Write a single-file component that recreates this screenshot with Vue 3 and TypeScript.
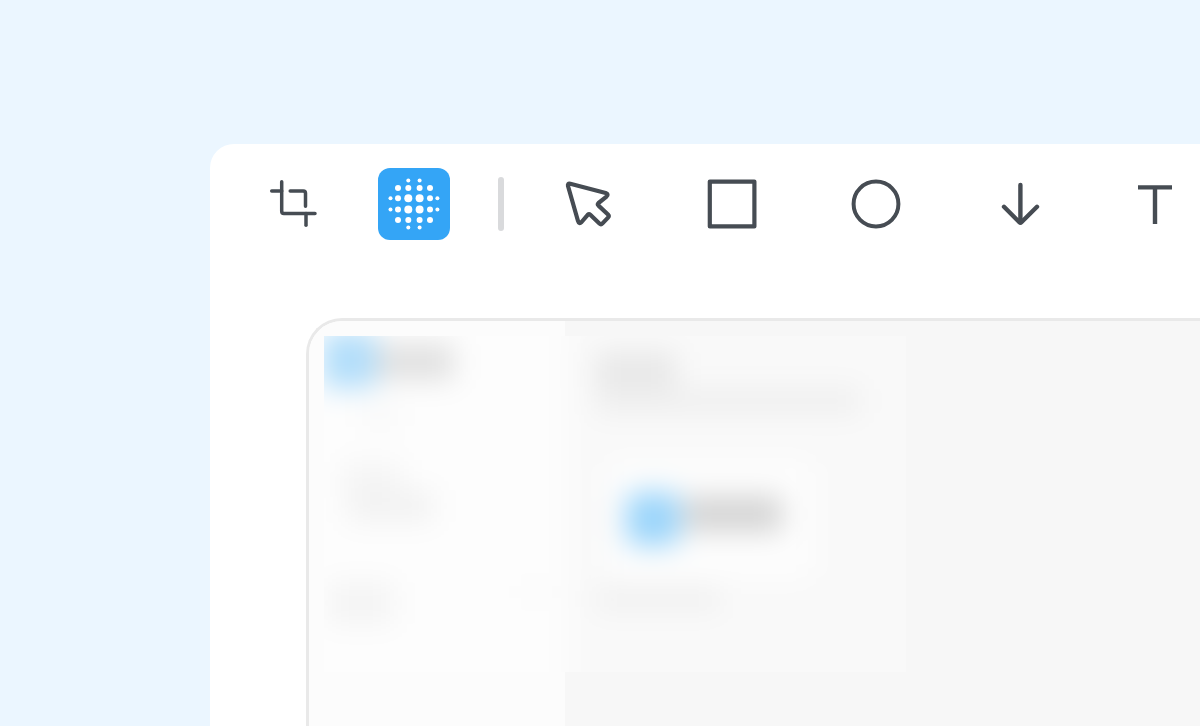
<script setup lang="ts">
import { ref } from 'vue'

interface Shape {
  x: number
  y: number
  w: number
  h: number
  r: number
  fill: string
}

type Dot = [number, number, number]

interface Tool {
  id: string
  label: string
  width?: number
  paths?: string[]
}

const active = ref('blur')

const editTools: Tool[] = [
  {
    id: 'crop',
    label: 'Crop',
    width: 3.5,
    paths: [
      'M23.7 13.7V43.3Q23.7 45.5 25.9 45.5H57',
      'M13.7 23H23.7',
      'M32.2 23H45.3Q47.5 23 47.5 25.2V38.3',
      'M48 45.5V57.3',
    ],
  },
  { id: 'blur', label: 'Blur' },
]

const drawTools: Tool[] = [
  {
    id: 'select',
    label: 'Select',
    width: 4.2,
    paths: [
      'M18.3 15.8L53.7 25Q57 26.2 54.5 28.6L46.5 35Q45.2 36.3 46.5 37.6L56 46.5Q57.5 48 56 49.6L50.5 55.4Q49 57 47.4 55.5L38.3 46.7Q37 45.5 35.7 46.8L29.6 54Q27 56.5 26 53L16 18Q15.4 15 18.3 15.8Z',
    ],
  },
  { id: 'square', label: 'Rectangle', width: 4.2, paths: ['M13.8 13.6H58.4V58.4H13.8Z'] },
  {
    id: 'circle',
    label: 'Ellipse',
    width: 4,
    paths: ['M36 13.6A22.4 22.4 0 1 1 36 58.4A22.4 22.4 0 1 1 36 13.6Z'],
  },
  {
    id: 'arrow',
    label: 'Arrow',
    width: 4.4,
    paths: ['M36.4 17V53', 'M20 38.8L35.4 54.2Q36.4 55.2 37.4 54.2L53 38.8', 'M35 52.8H37.8'],
  },
  { id: 'text', label: 'Text' },
]

const rows = [12.5, 20, 30.3, 41.6, 52, 59.4]
const radii = [
  [0, 0, 2, 2, 0, 0],
  [0, 3, 3, 3, 3, 0],
  [2, 3, 4, 4, 3, 2],
  [2, 3, 4, 4, 3, 2],
  [0, 3, 3, 3, 3, 0],
  [0, 0, 2, 2, 0, 0],
]
const dots: Dot[] = radii.flatMap((line, j) =>
  line.map((r, i): Dot => [rows[i], rows[j], r]).filter((d) => d[2] > 0),
)

const shapes: Shape[] = [
  { x: -2, y: -4, w: 54, h: 56, r: 8, fill: '#b2defb' },
  { x: 52, y: 8, w: 78, h: 36, r: 4, fill: '#e0e0e0' },
  { x: 38, y: 68, w: 36, h: 24, r: 4, fill: '#f8f8f8' },
  { x: 18, y: 126, w: 60, h: 36, r: 4, fill: '#f5f5f5' },
  { x: 24, y: 154, w: 86, h: 32, r: 4, fill: '#f2f2f2' },
  { x: 4, y: 246, w: 66, h: 42, r: 4, fill: '#f4f4f4' },
  { x: 196, y: 246, w: 26, h: 20, r: 4, fill: '#fafafa' },
  { x: 272, y: 16, w: 80, h: 38, r: 4, fill: '#e8e8e8' },
  { x: 272, y: 52, w: 264, h: 26, r: 4, fill: '#efefef' },
  { x: 284, y: 126, w: 204, h: 116, r: 12, fill: '#fdfdfd' },
  { x: 302, y: 156, w: 54, h: 54, r: 12, fill: '#9bd5fb' },
  { x: 360, y: 160, w: 98, h: 36, r: 4, fill: '#d4d4d4' },
  { x: 272, y: 252, w: 124, h: 22, r: 4, fill: '#f0f0f0' },
]
</script>

<template>
  <div class="page">
    <main class="editor">
      <div class="toolbar" role="toolbar" aria-label="Annotation tools">
        <div class="group">
          <button
            v-for="tool in editTools"
            :key="tool.id"
            type="button"
            class="tool"
            :class="{ active: active === tool.id }"
            :aria-label="tool.label"
            :aria-pressed="active === tool.id"
            @click="active = tool.id"
          >
            <svg viewBox="0 0 72 72" aria-hidden="true">
              <template v-if="tool.id === 'blur'">
                <circle
                  v-for="(dot, i) in dots"
                  :key="i"
                  class="dot"
                  :cx="dot[0]"
                  :cy="dot[1]"
                  :r="dot[2]"
                />
              </template>
              <path v-for="d in tool.paths" :key="d" :d="d" :stroke-width="tool.width" />
            </svg>
          </button>
        </div>
        <span class="divider" role="separator"></span>
        <div class="group wide">
          <button
            v-for="tool in drawTools"
            :key="tool.id"
            type="button"
            class="tool"
            :class="{ active: active === tool.id }"
            :aria-label="tool.label"
            :aria-pressed="active === tool.id"
            @click="active = tool.id"
          >
            <svg viewBox="0 0 72 72" aria-hidden="true">
              <g v-if="tool.id === 'text'" class="flat" stroke-width="4.4">
                <line x1="10" y1="19.4" x2="44" y2="19.4" />
                <line x1="27" y1="19.4" x2="27" y2="56" />
              </g>
              <path v-for="d in tool.paths" :key="d" :d="d" :stroke-width="tool.width" />
            </svg>
          </button>
        </div>
      </div>

      <section class="stage" aria-label="Canvas">
        <div class="canvas">
          <div class="side"></div>
          <div class="content"></div>
          <svg class="redaction" viewBox="0 0 582 336" role="img" aria-label="Blurred area">
            <defs>
              <filter
                id="soft"
                x="-100"
                y="-100"
                width="800"
                height="600"
                filterUnits="userSpaceOnUse"
                color-interpolation-filters="sRGB"
              >
                <feGaussianBlur stdDeviation="14" />
              </filter>
            </defs>
            <rect width="582" height="336" fill="#f9f9f9" />
            <g filter="url(#soft)">
              <rect x="-80" y="-80" width="321" height="500" fill="#fdfdfd" />
              <rect x="241" y="-80" width="441" height="500" fill="#f9f9f9" />
              <rect
                v-for="(s, i) in shapes"
                :key="i"
                :x="s.x"
                :y="s.y"
                :width="s.w"
                :height="s.h"
                :rx="s.r"
                :fill="s.fill"
              />
            </g>
          </svg>
        </div>
      </section>
    </main>
  </div>
</template>

<style>
body {
  margin: 0;
  background: #ebf6ff;
}
</style>

<style scoped>
.page {
  box-sizing: border-box;
  display: flex;
  height: 100vh;
  padding: 144px 0 0 210px;
  overflow: hidden;
  background: #ebf6ff;
  font-family: "Liberation Sans", sans-serif;
}

.editor {
  display: flex;
  flex: 1;
  flex-direction: column;
  min-width: 0;
  overflow: hidden;
  background: #fff;
  border-top-left-radius: 24px;
}

.toolbar {
  display: flex;
  align-items: center;
  gap: 48px;
  padding: 24px 0 24px 48px;
}

.group {
  display: flex;
  gap: 48px;
}

.group.wide {
  gap: 72px;
}

.tool {
  flex: none;
  width: 72px;
  height: 72px;
  padding: 0;
  border: 0;
  border-radius: 12px;
  background: transparent;
  color: #464c53;
  cursor: pointer;
}

.tool.active {
  background: #34a5f6;
  color: #fff;
}

.tool svg {
  display: block;
  width: 100%;
  height: 100%;
  fill: none;
  stroke: currentColor;
  stroke-linecap: round;
  stroke-linejoin: round;
}

.tool .dot {
  fill: currentColor;
  stroke: none;
}

.tool .flat {
  stroke-linecap: butt;
}

.divider {
  flex: none;
  width: 6px;
  height: 54px;
  border-radius: 3px;
  background: #d9dadc;
}

.stage {
  display: flex;
  flex: 1;
  padding: 54px 0 0 96px;
}

.canvas {
  position: relative;
  display: flex;
  flex: 1;
  overflow: hidden;
  border: 3px solid #e9e9e9;
  border-width: 3px 0 0 3px;
  border-top-left-radius: 36px;
}

.side {
  flex: none;
  width: 256px;
  background: #fcfcfc;
}

.content {
  flex: 1;
  background: #f7f7f7;
}

.redaction {
  position: absolute;
  top: 15px;
  left: 15px;
  width: 582px;
  height: 336px;
}
</style>
